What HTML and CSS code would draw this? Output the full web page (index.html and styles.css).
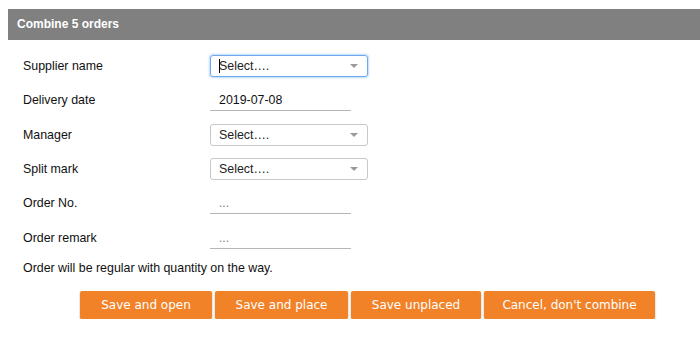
FILE: index.html
```html
<!DOCTYPE html>
<html>
<head>
<meta charset="utf-8">
<link rel="stylesheet" href="styles.css">
</head>
<body>
<div class="header">Combine 5 orders</div>
<div class="form">
  <div class="row">
    <label class="label">Supplier name</label>
    <div class="select focused"><span class="caret"></span><span class="val">Select….</span><span class="arrow"></span></div>
  </div>
  <div class="row">
    <label class="label">Delivery date</label>
    <div class="line"><span class="val">2019-07-08</span></div>
  </div>
  <div class="row">
    <label class="label">Manager</label>
    <div class="select"><span class="val">Select….</span><span class="arrow"></span></div>
  </div>
  <div class="row">
    <label class="label">Split mark</label>
    <div class="select"><span class="val">Select….</span><span class="arrow"></span></div>
  </div>
  <div class="row">
    <label class="label">Order No.</label>
    <div class="line"><span class="ph">...</span></div>
  </div>
  <div class="row">
    <label class="label">Order remark</label>
    <div class="line"><span class="ph">...</span></div>
  </div>
  <p class="note">Order will be regular with quantity on the way.</p>
  <div class="buttons">
    <button class="btn b1">Save and open</button>
    <button class="btn b2">Save and place</button>
    <button class="btn b3">Save unplaced</button>
    <button class="btn b4">Cancel, don't combine</button>
  </div>
</div>
</body>
</html>
```
FILE: styles.css
```css
html, body {
  margin: 0;
  padding: 0;
  background: #fff;
}
body {
  font-family: "Liberation Sans", Arial, sans-serif;
  font-size: 12.4px;
  color: #111;
}
.header {
  margin: 9px 0 0 8px;
  height: 31px;
  background: #808080;
  color: #fff;
  font-weight: bold;
  font-size: 12px;
  line-height: 31px;
  padding-left: 9px;
}
.form {
  padding: 9px 0 0 23px;
}
.row {
  display: flex;
  align-items: center;
  height: 34.3px;
}
.label {
  width: 187px;
  flex: none;
}
.select {
  position: relative;
  box-sizing: border-box;
  width: 158px;
  height: 22px;
  border: 1px solid #c8c8c8;
  border-radius: 3px;
  display: flex;
  align-items: center;
  padding-left: 8px;
  color: #222;
}
.select.focused {
  border-color: #6aa8ef;
  box-shadow: 0 0 2px 1px rgba(110, 170, 240, 0.45);
}
.caret {
  width: 1px;
  height: 14px;
  background: #000;
  margin-right: -1px;
}
.arrow {
  position: absolute;
  right: 9px;
  top: 8px;
  width: 0;
  height: 0;
  border-left: 4px solid transparent;
  border-right: 4px solid transparent;
  border-top: 4px solid #9a9a9a;
}
.line {
  box-sizing: border-box;
  width: 141px;
  height: 22px;
  border-bottom: 1px solid #b5b5b5;
  padding-left: 9px;
  display: flex;
  align-items: center;
  padding-top: 1px;
}
.ph {
  color: #777;
  font-size: 12px;
}
.note {
  margin: 5px 0 0;
  line-height: 16px;
}
.buttons {
  display: flex;
  gap: 3px;
  margin: 15px 0 0 57px;
}
.btn {
  height: 28px;
  border: none;
  border-radius: 2px;
  background: #f28227;
  color: #fff;
  font-family: "DejaVu Sans", Verdana, sans-serif;
  font-size: 12px;
  box-shadow: 0 1px 2px rgba(0, 0, 0, 0.35);
  padding: 0;
}
.b1 { width: 132px; }
.b2 { width: 133px; }
.b3 { width: 130px; }
.b4 { width: 171px; }
```
